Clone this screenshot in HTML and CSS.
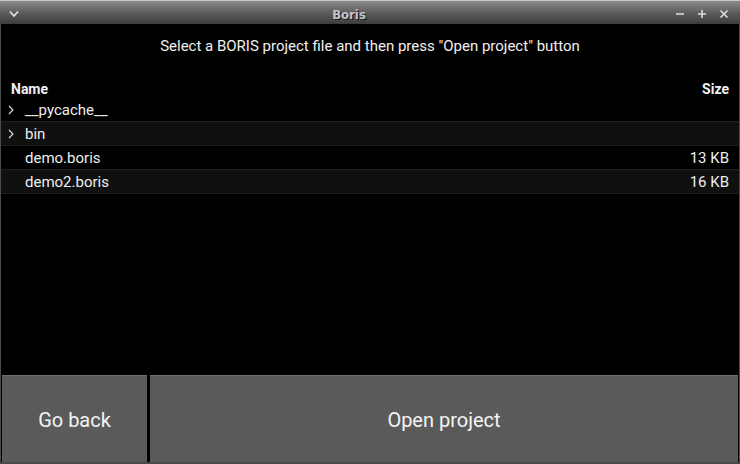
FILE: index.html
```html
<!DOCTYPE html>
<html>
<head>
<meta charset="utf-8">
<link rel="stylesheet" href="styles.css">
</head>
<body>
<div class="window">
  <div class="titlebar">
    <svg class="tb-menu" width="10" height="8" viewBox="0 0 10 8"><path d="M1 1.5 L5 6 L9 1.5" fill="none" stroke="#e8e8e8" stroke-width="1.6"/></svg>
    <div class="tb-title">Boris</div>
    <div class="tb-buttons">
      <svg width="10" height="10" viewBox="0 0 10 10"><path d="M1 5 H9" stroke="#dcdcdc" stroke-width="1.6"/></svg>
      <svg width="10" height="10" viewBox="0 0 10 10"><path d="M1 5 H9 M5 1 V9" stroke="#dcdcdc" stroke-width="1.6"/></svg>
      <svg width="10" height="10" viewBox="0 0 10 10"><path d="M1.5 1.5 L8.5 8.5 M8.5 1.5 L1.5 8.5" stroke="#dcdcdc" stroke-width="1.6"/></svg>
    </div>
  </div>
  <div class="content">
    <div class="prompt">Select a BORIS project file and then press "Open project" button</div>
    <div class="list">
      <div class="head"><span>Name</span><span>Size</span></div>
      <div class="row"><span class="chev"><svg width="6" height="10" viewBox="0 0 6 10"><path d="M1 1 L5 5 L1 9" fill="none" stroke="#e0e0e0" stroke-width="1.1"/></svg></span><span class="name">__pycache__</span><span class="size"></span></div>
      <div class="row alt"><span class="chev"><svg width="6" height="10" viewBox="0 0 6 10"><path d="M1 1 L5 5 L1 9" fill="none" stroke="#e0e0e0" stroke-width="1.1"/></svg></span><span class="name">bin</span><span class="size"></span></div>
      <div class="row"><span class="chev"></span><span class="name">demo.boris</span><span class="size">13 KB</span></div>
      <div class="row alt"><span class="chev"></span><span class="name">demo2.boris</span><span class="size">16 KB</span></div>
    </div>
    <div class="buttons">
      <div class="btn back">Go back</div>
      <div class="btn open">Open project</div>
    </div>
  </div>
</div>
</body>
</html>
```
FILE: styles.css
```css
html, body { margin: 0; padding: 0; background: #000; }
body { width: 740px; height: 464px; overflow: hidden; font-family: Roboto, "Liberation Sans", sans-serif; }
.window { width: 740px; height: 464px; display: flex; flex-direction: column; box-sizing: border-box; background: #4a4a4a; border-top: 1px solid #c8c8c8; }
.titlebar { height: 23px; display: flex; align-items: center; position: relative; background: linear-gradient(#8c8c8c, #5e5e5e 50%, #3c3c3c); flex: none; }
.tb-menu { margin-left: 9px; margin-top: 2px; }
.tb-title { position: absolute; left: 0; right: 42px; text-align: center; top: 6px; font-family: "DejaVu Sans Condensed", "DejaVu Sans", sans-serif; font-stretch: condensed; font-weight: bold; font-size: 13px; line-height: 15px; color: #c4c4cc; text-shadow: 1px 1px 0 #1c1c24; }
.tb-buttons { margin-left: auto; margin-right: 11px; display: flex; gap: 12px; margin-top: 3px; }
.content { flex: 1; background: #000; margin: 0 1px 2px 1px; display: flex; flex-direction: column; }
.prompt { color: #f0f0f0; font-size: 15px; text-align: center; padding-top: 13px; height: 40px; box-sizing: border-box; }
.list { display: flex; flex-direction: column; padding-top: 16px; flex: 1; }
.head { display: flex; justify-content: space-between; padding: 0 10px 0 10px; font-weight: bold; font-size: 14px; color: #f2f2f2; height: 18px; line-height: 19px; }
.row { display: flex; align-items: center; height: 23px; border-bottom: 1px solid #1e1e1e; color: #eeeeee; font-size: 15px; }
.row.alt { background: #101010; }
.chev { width: 24px; padding-left: 7px; box-sizing: border-box; display: flex; align-items: center; }
.name { flex: 1; }
.size { padding-right: 10px; }
.buttons { display: flex; gap: 3px; height: 87px; padding: 0 1px; flex: none; }
.btn { background: #5a5a5a; color: #f4f4f4; font-size: 20px; display: flex; align-items: center; justify-content: center; border-top: 1px solid #6e6e6e; box-sizing: border-box; padding-top: 1px; }
.back { width: 145px; }
.open { flex: 1; }
```
